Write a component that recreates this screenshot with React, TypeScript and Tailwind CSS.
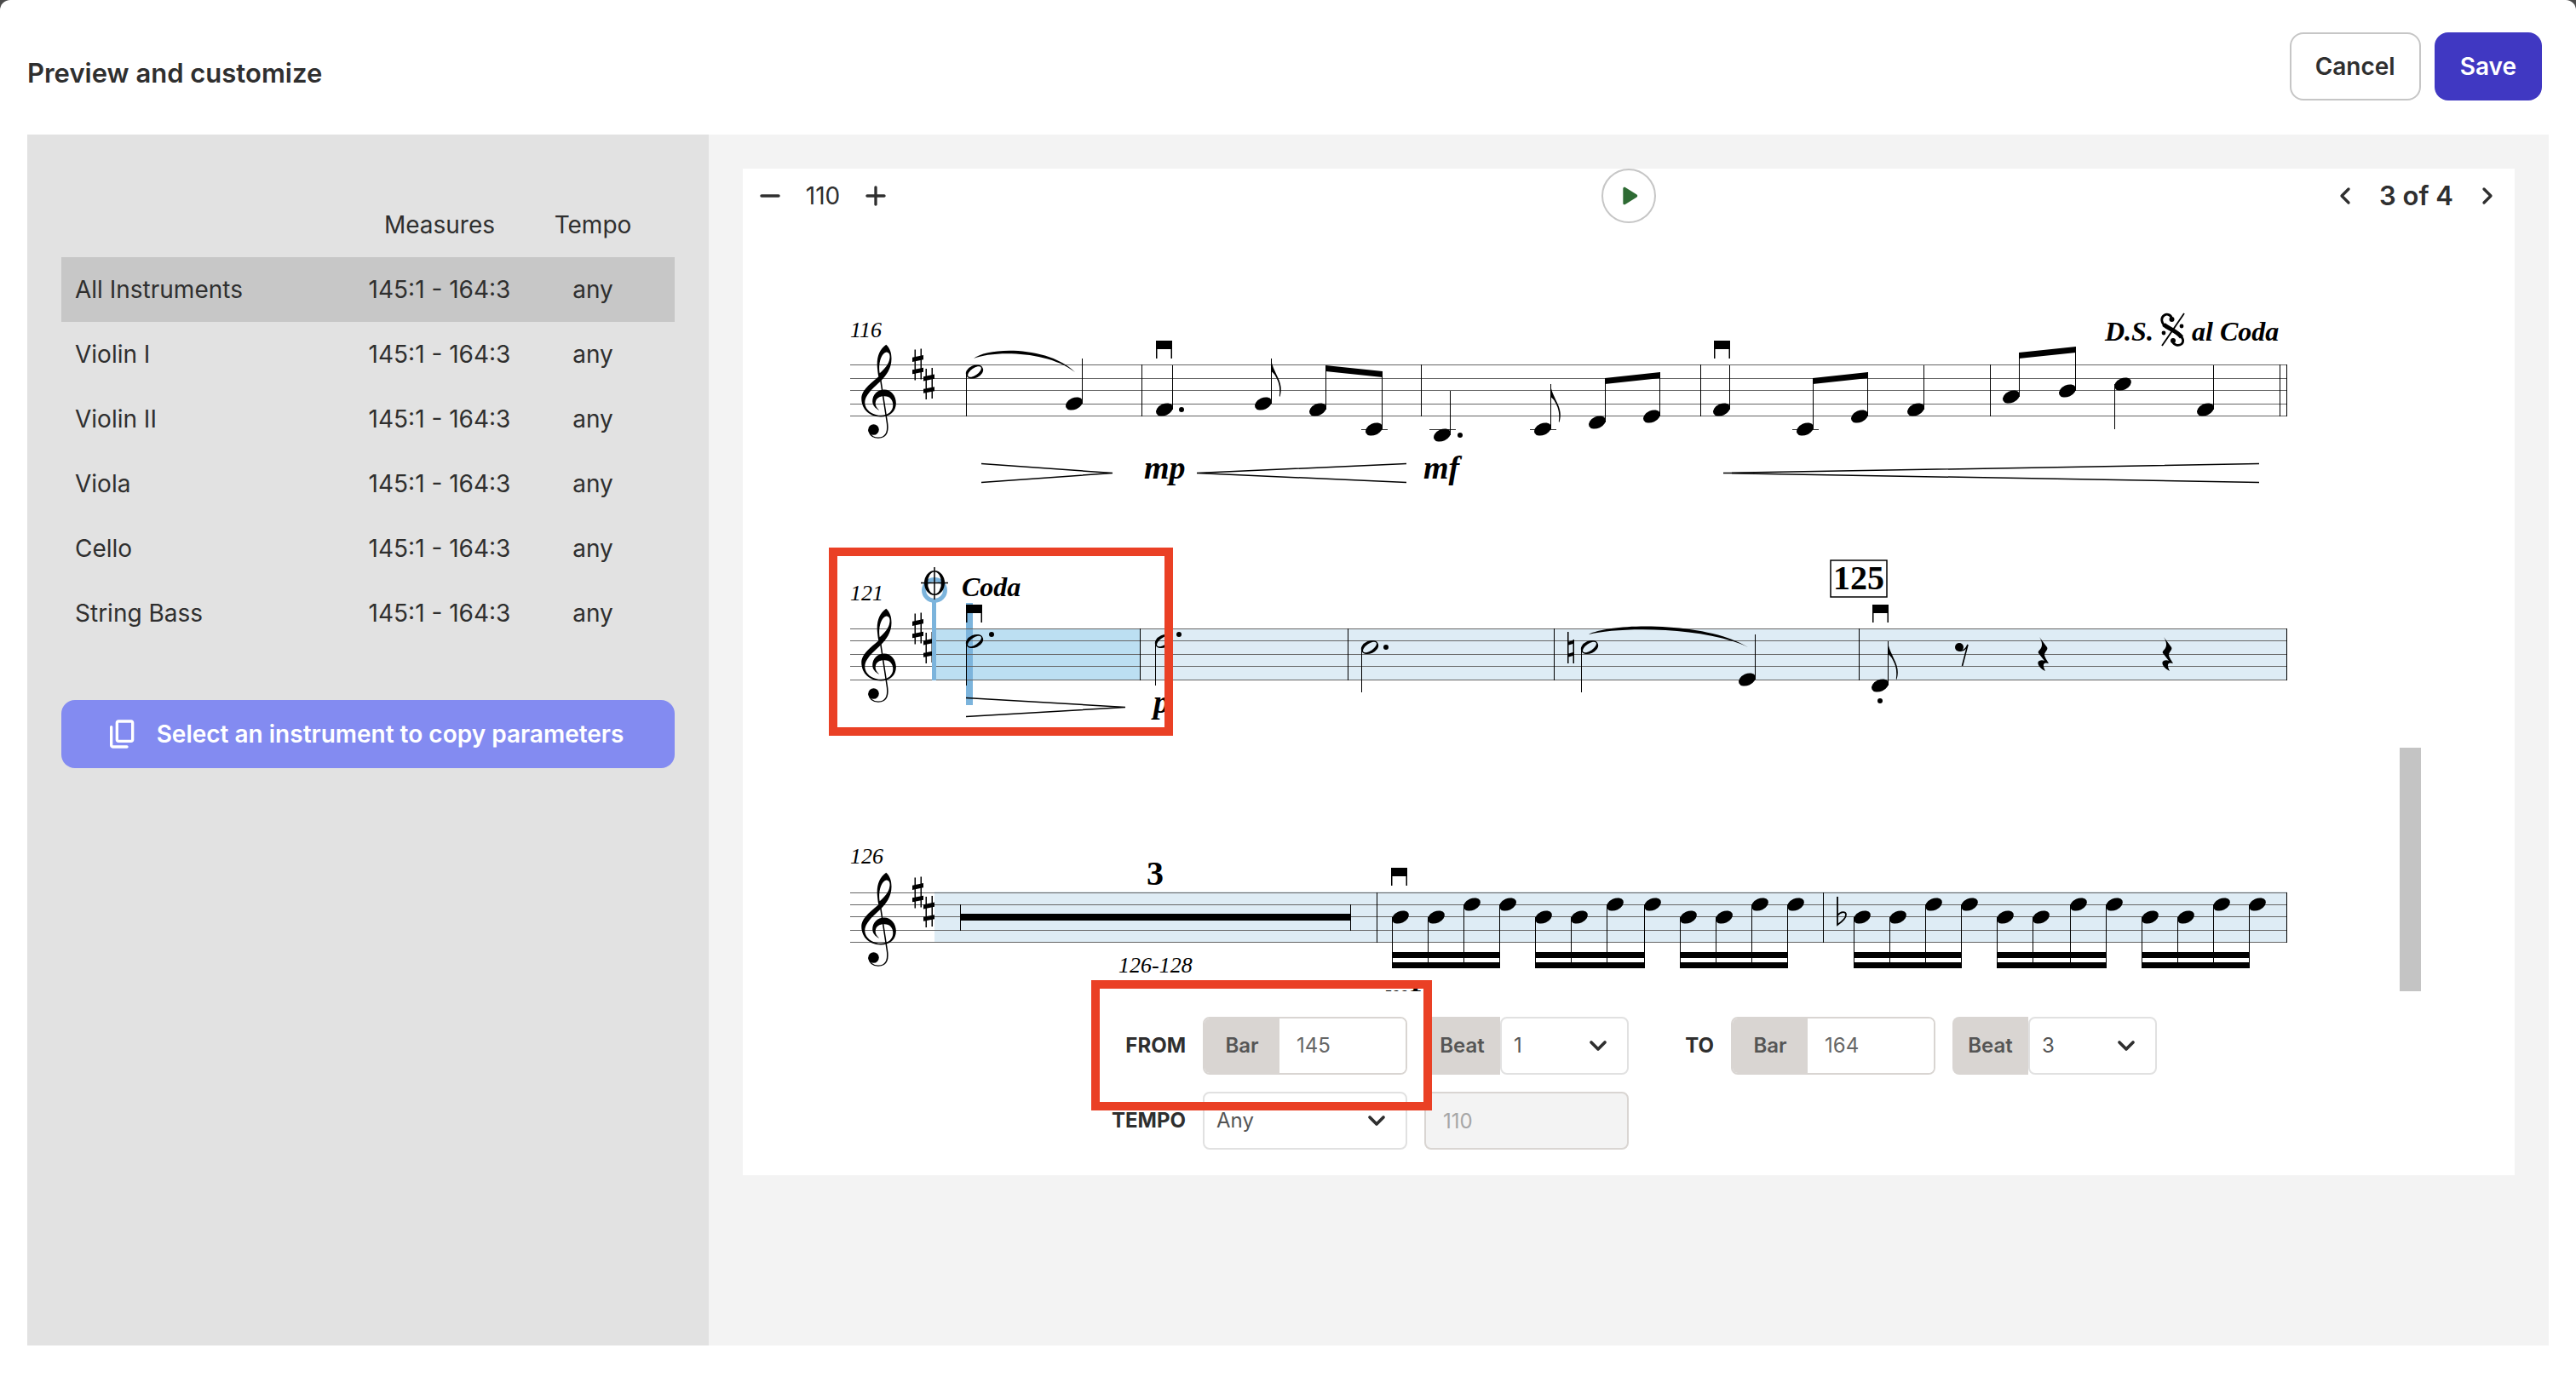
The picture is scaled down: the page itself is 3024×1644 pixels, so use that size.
import type { ReactNode } from "react";
import { ChevronDown, ChevronLeft, ChevronRight } from "lucide-react";

const instruments = ["All Instruments", "Violin I", "Violin II", "Viola", "Cello", "String Bass"];

/* ---------- notation primitives ---------- */

const STAFF_LEFT = 998;
const STAFF_RIGHT = 2685;

type Note = {
  x: number;
  y: number;
  stem: number;
  down?: boolean;
  half?: boolean;
  flag?: boolean;
  dot?: [number, number];
  ledger?: number;
};

function Stem({ x, y1, y2 }: { x: number; y1: number; y2: number }) {
  return <rect x={Math.floor(x)} y={Math.min(y1, y2)} width="1" height={Math.abs(y2 - y1)} shapeRendering="crispEdges" />;
}

function NoteMark({ x, y, stem, down, half, flag, dot, ledger }: Note) {
  const sx = down ? x - 10 : x + 9;
  return (
    <g>
      {ledger && <rect x={x - 15} y={ledger} width="31" height="1" fill="#333" shapeRendering="crispEdges" />}
      {half ? (
        <path
          transform={`translate(${x} ${y})`}
          fillRule="evenodd"
          d="M-9.5,4.4A10.5,6.8 -25 1 1 9.5,-4.4A10.5,6.8 -25 1 1 -9.5,4.4ZM-7.6,5.2A9.2,4.2 -35 1 0 7.6,-5.2A9.2,4.2 -35 1 0 -7.6,5.2Z"
        />
      ) : (
        <ellipse cx={x} cy={y} rx="10.5" ry="6.8" transform={`rotate(-25 ${x} ${y})`} />
      )}
      <Stem x={sx} y1={y} y2={stem} />
      {flag && (
        <path
          transform={`translate(${Math.floor(sx)} ${stem})`}
          d="M0,0C1,8 4,13 7,20C12,30 13,36 10.5,45L9.8,44C11,36 10,29 6,22C4,18 2,16 0,15Z"
        />
      )}
      {dot && <circle cx={dot[0]} cy={dot[1]} r="3" />}
    </g>
  );
}

function Beam({ x1, y1, x2, y2 }: { x1: number; y1: number; x2: number; y2: number }) {
  return <path d={`M${x1},${y1}L${x2},${y2}V${y2 + 7}L${x1},${y1 + 7}Z`} />;
}

function DownBow({ x, y }: { x: number; y: number }) {
  return <path d={`M${x},${y}h19v21h-1.5v-11h-16v11h-1.5z`} />;
}

function Sharp({ x, y }: { x: number; y: number }) {
  return (
    <path
      transform={`translate(${x} ${y})`}
      d="M-4,-17.5h1.5v36h-1.5zM3,-18.5h1.5v36h-1.5zM-6.5,-8.3L6.5,-11V-5.7L-6.5,-3zM-6.5,6.3L6.5,3.7V8.7L-6.5,11.3z"
    />
  );
}

function Clef({ y }: { y: number }) {
  return (
    <g transform={`translate(980 ${y - 88.5}) scale(0.4464 0.3333)`}>
      <path
        fillRule="evenodd"
        d="M135,196C116,212 109,245 112,280C113,295 114,303 115,308C95,332 70,355 70,385C70,425 92,450 121,450C145,450 161,430 161,402C161,375 148,354 130,354C112,354 99,372 99,395C99,408 106,420 117,427C109,418 106,408 107,400C108,385 117,377 130,377C146,377 153,392 153,408C153,430 140,445 122,445C98,445 79,425 79,400C79,375 98,352 120,325C135,305 149,280 149,245C149,225 145,208 135,196ZM118,296C114,270 120,226 136,222C143,222 146,232 144,245C142,265 130,282 118,296Z"
      />
      <path d="M118,298L137,465C141,495 139,524 114,524C99,524 91,512 89,495" fill="none" stroke="#000" strokeWidth="3.5" />
      <ellipse cx="102" cy="495" rx="14" ry="19" />
    </g>
  );
}

function QuarterRest({ x, y }: { x: number; y: number }) {
  return (
    <path
      transform={`translate(${x} ${y})`}
      d="M-4,0L5,12C6,14 5,15 3,18C1,21 2,23 7,31C1,29 -1,32 3,40C-4,37 -8,30 -4,28C-2,27 0,27 2,28L-5,19C-6,17 -4,16 -2,13C0,9 -1,5 -4,0Z"
    />
  );
}

function Hairpin({ tip, open, y }: { tip: number; open: number; y: number }) {
  return <path d={`M${open},${y - 11}L${tip},${y}L${open},${y + 11}`} fill="none" stroke="#000" strokeWidth="1.5" />;
}

function Slur({ x1, y1, x2, y2 }: { x1: number; y1: number; x2: number; y2: number }) {
  const w = x2 - x1;
  return (
    <path
      d={`M${x1},${y1}C${x1 + w * 0.14},${y1 - 14} ${x1 + w * 0.74},${y1 - 15} ${x2},${y2}C${x1 + w * 0.72},${y1 - 10} ${x1 + w * 0.18},${y1 - 9} ${x1},${y1}Z`}
    />
  );
}

function Staff({ lines, bars, children }: { lines: number[]; bars: number[]; children: ReactNode }) {
  return (
    <g>
      {lines.map((y) => (
        <rect key={y} x={STAFF_LEFT} y={y} width={STAFF_RIGHT - STAFF_LEFT} height="1" fill="#666" shapeRendering="crispEdges" />
      ))}
      {bars.map((x) => (
        <rect key={x} x={x} y={lines[0]} width="1" height={lines[4] - lines[0] + 1} shapeRendering="crispEdges" />
      ))}
      <Clef y={lines[0]} />
      <Sharp x={1077.5} y={lines[0]} />
      <Sharp x={1090.5} y={lines[0] + 22.5} />
      {children}
    </g>
  );
}

/* ---------- music data ---------- */

const firstLine: Note[] = [
  { x: 1144, y: 436.5, stem: 489, down: true, half: true },
  { x: 1261, y: 474, stem: 421 },
  { x: 1367, y: 481, stem: 429, dot: [1387, 481] },
  { x: 1483, y: 474, stem: 421, flag: true },
  { x: 1547, y: 481, stem: 430 },
  { x: 1613, y: 504, stem: 437, ledger: 504 },
  { x: 1693, y: 511, stem: 459, dot: [1714, 511], ledger: 504 },
  { x: 1811, y: 504, stem: 451, flag: true, ledger: 504 },
  { x: 1875, y: 496, stem: 445 },
  { x: 1939, y: 489, stem: 437 },
  { x: 2021, y: 481, stem: 429 },
  { x: 2119, y: 504, stem: 445, ledger: 504 },
  { x: 2183, y: 489, stem: 437 },
  { x: 2249, y: 481, stem: 429 },
  { x: 2361, y: 466, stem: 415 },
  { x: 2427, y: 459, stem: 408 },
  { x: 2492, y: 451, stem: 504, down: true },
  { x: 2589, y: 481, stem: 429 },
];

const secondLine: Note[] = [
  { x: 1144, y: 753, stem: 805, down: true, half: true, dot: [1164, 745] },
  { x: 1366, y: 753, stem: 805, down: true, half: true, dot: [1384, 745] },
  { x: 1608, y: 760, stem: 813, down: true, half: true, dot: [1627, 760] },
  { x: 1866, y: 760, stem: 813, down: true, half: true },
  { x: 2051, y: 798, stem: 745 },
  { x: 2207, y: 805, stem: 753, flag: true, dot: [2207, 823] },
];

const sixteenths = [
  [1644, 1686, 1728, 1770],
  [1812, 1854, 1896, 1940],
  [1982, 2024, 2066, 2108],
  [2186, 2228, 2270, 2312],
  [2354, 2396, 2440, 2482],
  [2524, 2566, 2608, 2650],
];

function Score() {
  return (
    <svg viewBox="872 262 1945 902" className="min-w-0 flex-1" role="img" aria-label="Violin part, page 3">
      {/* selected range */}
      <rect x="1097" y="738" width="242" height="61" fill="#bcdff2" />
      <rect x="1339" y="738" width="1346" height="61" fill="#deecf5" />
      <rect x="1097" y="1047" width="1588" height="60" fill="#deecf5" />
      <rect x="1134" y="708" width="8" height="120" fill="#7cb4dc" />

      <g fontFamily="'Liberation Serif', serif">
        <Staff lines={[428, 444, 458, 474, 488]} bars={[1340, 1668, 1996, 2336, 2676, 2684]}>
          <text x="998" y="396" fontSize="26" fontStyle="italic">116</text>
          {firstLine.map((n) => (
            <NoteMark key={n.x} {...n} />
          ))}
          <Slur x1={1143} y1={421} x2={1262} y2={437} />
          <Beam x1={1556} y1={429} x2={1623} y2={436} />
          <Beam x1={1884} y1={444} x2={1949} y2={437} />
          <Beam x1={2128} y1={444} x2={2193} y2={437} />
          <Beam x1={2370} y1={414} x2={2437} y2={407} />
          <DownBow x={1357} y={400} />
          <DownBow x={2012} y={400} />
          <Hairpin open={1152} tip={1306} y={555.5} />
          <Hairpin open={1651} tip={1405} y={555.5} />
          <Hairpin open={2652} tip={2023} y={555.5} />
          <g fontWeight="bold" fontStyle="italic">
            <text x="1343" y="562" fontSize="38">mp</text>
            <text x="1671" y="562" fontSize="38">mf</text>
            <text x="2471" y="400" fontSize="32">D.S.</text>
            <text x="2573" y="400" fontSize="32">al Coda</text>
          </g>
          {/* segno */}
          <g fill="none" stroke="#000">
            <path d="M2538,406L2564,368" strokeWidth="1.8" />
            <path d="M2549,375C2550,370 2544,368 2541,370C2536,373 2537,380 2543,384L2557,392C2563,396 2564,401 2561,404C2557,407 2551,405 2550,400" strokeWidth="2.8" />
            <path d="M2540,381C2544,385 2556,389 2561,396" strokeWidth="5" />
          </g>
          <circle cx="2549.5" cy="375" r="3" />
          <circle cx="2551" cy="400" r="3" />
          <circle cx="2540" cy="391" r="2.4" />
          <circle cx="2561" cy="383" r="2.4" />
        </Staff>

        <Staff lines={[738, 752, 768, 782, 798]} bars={[1338, 1582, 1824, 2182, 2684]}>
          <rect x="1094" y="707" width="5" height="92" fill="#7cb4dc" />
          <circle cx="1097" cy="693" r="12.5" fill="none" stroke="#7cb4dc" strokeWidth="5" />
          <text x="998" y="705" fontSize="26" fontStyle="italic">121</text>
          <path fillRule="evenodd" d="M1085,684.5a12,14.5 0 1 1 24,0a12,14.5 0 1 1 -24,0zM1089,684.5a8,13 0 1 0 16,0a8,13 0 1 0 -16,0z" />
          <path d="M1097,666V704M1081,684.5H1113" stroke="#000" strokeWidth="1.5" />
          <text x="1129" y="700" fontSize="32" fontWeight="bold" fontStyle="italic">Coda</text>
          <DownBow x={1134} y={710} />
          {secondLine.map((n) => (
            <NoteMark key={n.x} {...n} />
          ))}
          <Hairpin open={1134} tip={1321} y={830.5} />
          <text x="1354" y="837" fontSize="38" fontWeight="bold" fontStyle="italic">p</text>
          {/* natural */}
          <path d="M1840,742h1.5v37h-1.5zM1846.5,751h1.5v28h-1.5zM1840,754l8,-2.5v4l-8,2.5zM1840,768l8,-2.5v4l-8,2.5z" />
          <Slur x1={1865} y1={745} x2={2052} y2={760} />
          <rect x="2149" y="658" width="66" height="43" fill="#fff" stroke="#000" strokeWidth="1.5" />
          <text x="2182" y="692" fontSize="40" fontWeight="bold" textAnchor="middle">125</text>
          <DownBow x={2198} y={710} />
          {/* eighth rest */}
          <circle cx="2300" cy="760" r="5" />
          <path d="M2300,764C2305,765 2308,762 2310,757L2303.5,782" fill="none" stroke="#000" strokeWidth="1.6" />
          <QuarterRest x={2398} y={748} />
          <QuarterRest x={2544} y={748} />
        </Staff>

        <Staff lines={[1048, 1062, 1076, 1092, 1106]} bars={[1616, 2140, 2684]}>
          <text x="998" y="1014" fontSize="26" fontStyle="italic">126</text>
          <text x="1346" y="1039" fontSize="40" fontWeight="bold">3</text>
          <rect x="1127" y="1073" width="459" height="8" />
          <rect x="1127" y="1062" width="1" height="31" shapeRendering="crispEdges" />
          <rect x="1585" y="1062" width="1" height="31" shapeRendering="crispEdges" />
          <text x="1313" y="1142" fontSize="26" fontStyle="italic">126-128</text>
          <DownBow x={1633} y={1019} />
          {sixteenths.map((group) => (
            <g key={group[0]}>
              {group.map((x, i) => (
                <NoteMark key={x} x={x} y={i < 2 ? 1077 : 1062} stem={1137} down />
              ))}
              <rect x={group[0] - 10} y="1118" width={group[3] - group[0] + 1} height="7" />
              <rect x={group[0] - 10} y="1130" width={group[3] - group[0] + 1} height="7" />
            </g>
          ))}
          {/* flat */}
          <path d="M2157,1053V1086C2163,1082 2167,1078 2167,1074C2167,1070 2161,1070 2157,1075" fill="none" stroke="#000" strokeWidth="1.8" />
          <text x="1625" y="1181" fontSize="38" fontWeight="bold" fontStyle="italic">mf</text>
        </Staff>
      </g>
    </svg>
  );
}

/* ---------- range form ---------- */

function BarField({ id, value, label }: { id: string; value: string; label: string }) {
  return (
    <div className="flex h-[68px] overflow-hidden rounded-lg border-2 border-[#d9d5d2]">
      <label htmlFor={id} className="flex w-[88px] shrink-0 items-center justify-center bg-[#d9d5d2] font-semibold text-[#555]">
        Bar
      </label>
      <input id={id} aria-label={label} defaultValue={value} className="w-full min-w-0 bg-white px-5 text-[#666] outline-none" />
    </div>
  );
}

function Dropdown({ id, options, value }: { id: string; options: string[]; value: string }) {
  return (
    <div className="relative min-w-0 flex-1">
      <select
        id={id}
        defaultValue={value}
        className="h-[68px] w-full appearance-none rounded-lg border-2 border-[#e1e1e1] bg-white px-3.5 text-[#555] outline-none"
      >
        {options.map((o) => (
          <option key={o}>{o}</option>
        ))}
      </select>
      <ChevronDown className="pointer-events-none absolute top-[18px] right-5 size-8 text-[#2f2f2f]" strokeWidth={2.8} />
    </div>
  );
}

function BeatField({ id, value }: { id: string; value: string }) {
  return (
    <div className="flex">
      <label htmlFor={id} className="flex w-[89px] shrink-0 items-center justify-center rounded-l-lg bg-[#d9d5d2] font-semibold text-[#555]">
        Beat
      </label>
      <Dropdown id={id} options={["1", "2", "3", "4"]} value={value} />
    </div>
  );
}

function RangeForm() {
  return (
    <form className="grid grid-cols-[100px_240px_240px_80px_240px_240px] items-center justify-center gap-5 py-[30px] text-2xl">
      <span className="text-right font-bold">FROM</span>
      <BarField id="from-bar" label="From bar" value="145" />
      <BeatField id="from-beat" value="1" />
      <span className="text-right font-bold">TO</span>
      <BarField id="to-bar" label="To bar" value="164" />
      <BeatField id="to-beat" value="3" />
      <label htmlFor="tempo" className="text-right font-bold">TEMPO</label>
      <Dropdown id="tempo" options={["Any", "Exact"]} value="Any" />
      <input
        aria-label="Tempo value"
        disabled
        defaultValue="110"
        className="h-[68px] w-full rounded-lg border-2 border-[#d9d5d2] bg-[#f3f3f3] px-5 text-[#a6a6a6]"
      />
    </form>
  );
}

/* ---------- page ---------- */

function Sidebar() {
  return (
    <aside className="w-[800px] shrink-0 bg-[#e2e2e2] px-10 pt-[68px]">
      <table className="w-full table-fixed border-collapse text-[28px]">
        <thead>
          <tr className="h-[76px]">
            <th className="w-[360px]"></th>
            <th className="w-[168px] font-normal">Measures</th>
            <th className="font-normal">Tempo</th>
          </tr>
        </thead>
        <tbody>
          {instruments.map((name, i) => (
            <tr key={name} className={i === 0 ? "h-[76px] bg-[#c7c7c7]" : "h-[76px]"}>
              <td className="pl-4">{name}</td>
              <td className="text-center whitespace-nowrap">145:1 - 164:3</td>
              <td className="text-center">any</td>
            </tr>
          ))}
        </tbody>
      </table>
      <button className="mt-16 flex h-20 w-full items-center justify-center gap-5 rounded-2xl bg-[#838bf1] text-[28px] font-semibold text-white">
        <svg viewBox="0 0 24 24" className="-ml-2 size-10" fill="currentColor">
          <path d="M15 20H5V7c0-.55-.45-1-1-1s-1 .45-1 1v13c0 1.1.9 2 2 2h10c.55 0 1-.45 1-1s-.45-1-1-1zm5-4V4c0-1.1-.9-2-2-2H9c-1.1 0-2 .9-2 2v12c0 1.1.9 2 2 2h9c1.1 0 2-.9 2-2zm-2 0H9V4h9v12z" />
        </svg>
        Select an instrument to copy parameters
      </button>
    </aside>
  );
}

function Toolbar() {
  return (
    <div className="grid h-16 grid-cols-[1fr_auto_1fr] items-center px-4">
      <div className="-ml-1 flex items-center gap-5 text-[28px]">
        <button aria-label="Slower">
          <svg viewBox="0 0 24 24" className="size-10" fill="currentColor">
            <path d="M18 13H6c-.55 0-1-.45-1-1s.45-1 1-1h12c.55 0 1 .45 1 1s-.45 1-1 1z" />
          </svg>
        </button>
        <span className="w-11 text-center">110</span>
        <button aria-label="Faster">
          <svg viewBox="0 0 24 24" className="size-10" fill="currentColor">
            <path d="M18 13h-5v5c0 .55-.45 1-1 1s-1-.45-1-1v-5H6c-.55 0-1-.45-1-1s.45-1 1-1h5V6c0-.55.45-1 1-1s1 .45 1 1v5h5c.55 0 1 .45 1 1s-.45 1-1 1z" />
          </svg>
        </button>
      </div>
      <button aria-label="Play" className="flex size-16 items-center justify-center rounded-full border-2 border-[#c6c6c6] bg-white text-[#2e6b34]">
        <svg viewBox="0 0 24 24" className="size-10" fill="currentColor">
          <path d="M8 6.82v10.36c0 .79.87 1.27 1.54.84l8.14-5.18c.62-.39.62-1.29 0-1.69L9.54 5.98C8.87 5.55 8 6.03 8 6.82z" />
        </svg>
      </button>
      <div className="flex items-center justify-end gap-6 text-[31px] font-semibold">
        <button aria-label="Previous page">
          <ChevronLeft className="size-8" strokeWidth={2.5} />
        </button>
        <span>3 of 4</span>
        <button aria-label="Next page">
          <ChevronRight className="size-8" strokeWidth={2.5} />
        </button>
      </div>
    </div>
  );
}

export default function App() {
  return (
    <div className="min-h-screen bg-[#4b4b4b] font-['Inter',sans-serif] text-[#2f2f2f]">
      <div className="flex min-h-screen flex-col rounded-t-xl bg-white px-8 pb-16">
        <header className="-mr-2 flex items-center gap-4 pt-[38px] pr-4 pb-10">
          <h1 className="mr-auto pt-4 text-[31px] font-semibold">Preview and customize</h1>
          <button className="h-20 rounded-2xl border-2 border-[#c6c6c6] px-7 text-[28px] font-semibold">Cancel</button>
          <button className="h-20 rounded-2xl bg-[#4038c2] px-[30px] text-[28px] font-semibold text-white">Save</button>
        </header>

        <div className="flex flex-1">
          <Sidebar />
          <main className="min-w-0 flex-1 bg-[#f3f3f3] p-10">
            <section className="relative bg-white">
              <Toolbar />
              <div className="flex items-end pr-[110px]">
                <Score />
                <div className="h-[286px] w-[25px] bg-[#c4c4c4]"></div>
              </div>
              <RangeForm />

              {/* callouts */}
              <div className="pointer-events-none absolute top-[445px] left-[101px] h-[221px] w-[404px] border-10 border-[#ea4025]"></div>
              <div className="pointer-events-none absolute top-[953px] left-[409px] h-[153px] w-[400px] border-10 border-[#ea4025]"></div>
            </section>
          </main>
        </div>
      </div>
    </div>
  );
}
